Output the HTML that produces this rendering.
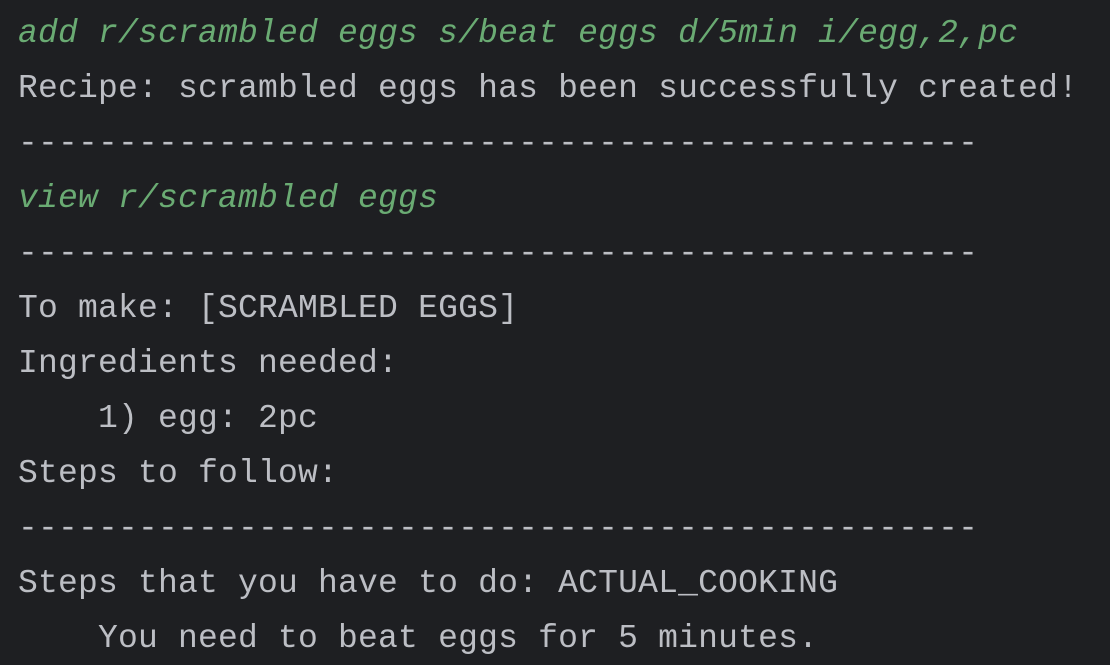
<!DOCTYPE html>
<html><head><meta charset="utf-8"><style>
html,body{margin:0;padding:0;background:#1e1f22;width:1110px;height:665px;overflow:hidden}
pre{margin:0;padding:6px 0 0 18px;font-family:"Liberation Mono","DejaVu Sans Mono",monospace;font-size:33px;letter-spacing:0.2px;line-height:55px;color:#bcbec4}
.g{color:#6aab73;font-style:italic}
</style></head><body><pre><span class="g">add r/scrambled eggs s/beat eggs d/5min i/egg,2,pc</span>
Recipe: scrambled eggs has been successfully created!
------------------------------------------------
<span class="g">view r/scrambled eggs</span>
------------------------------------------------
To make: [SCRAMBLED EGGS]
Ingredients needed:
    1) egg: 2pc
Steps to follow:
------------------------------------------------
Steps that you have to do: ACTUAL_COOKING
    You need to beat eggs for 5 minutes.</pre></body></html>
